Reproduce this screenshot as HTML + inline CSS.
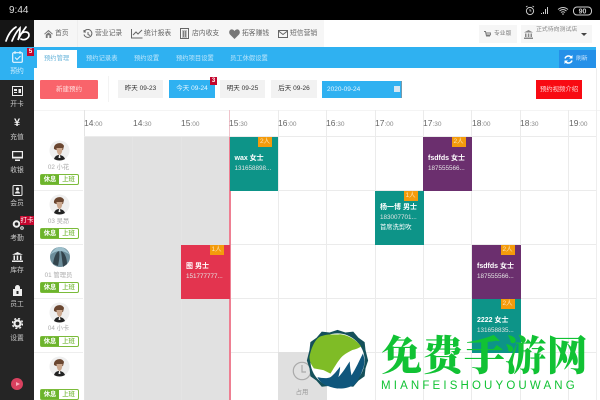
<!DOCTYPE html>
<html><head><meta charset="utf-8">
<style>
*{margin:0;padding:0;box-sizing:border-box}
html,body{width:600px;height:400px;overflow:hidden;background:#fff}
body{position:relative;font-family:"Liberation Sans","Noto Sans CJK SC",sans-serif}
#w{position:absolute;left:0;top:0;width:600px;height:400px;overflow:hidden;filter:blur(.3px)}
.a{position:absolute;white-space:nowrap}
.side{text-align:center;width:34px;left:0;color:#ccc;font-size:6.8px;line-height:12px}
.nav{font-size:6.8px;color:#666;line-height:12px;top:28px}
.tab{font-size:6.3px;color:#bfe6fb;line-height:12px;top:53px}
.day{top:80px;height:18px;background:#f2f2f2;color:#333;font-size:6.500px;line-height:18px;text-align:center;width:45px}
.t{top:117px;font-size:8.500px;color:#666;line-height:12px}
.t small{font-size:6.500px;color:#888}
.vl{top:110px;width:1px;height:290px;background:#ebebeb}
.hl{left:230px;width:366px;height:1px;background:#ebebeb}
.bk{color:#fff;width:48.5px}
.bd{position:absolute;right:6px;top:0;width:14px;height:10px;background:#f49b0b;font-size:6.500px;line-height:10px;text-align:center;color:#fde3b5}
.n{position:absolute;left:5px;top:17px;font-size:7px;font-weight:bold;line-height:10px}
.p{position:absolute;left:5px;top:27px;font-size:6.300px;line-height:10px;color:#e4e4e4}
.nm{left:34px;width:49px;text-align:center;font-size:6.300px;color:#aaa;line-height:9px}
.btn{left:40px;width:39px;height:11px;border:1px solid #7bbb3a;border-radius:2px;background:#fff;font-size:6.300px;line-height:9px;color:#8cc45a}
.btn b{display:inline-block;width:18px;height:9px;background:#6cb42c;color:#fff;text-align:center;float:left}
.btn span{display:inline-block;width:19px;text-align:center;float:left;font-weight:bold}
</style></head><body><div id="w">
<div class="a" style="left:0;top:0;width:600px;height:20px;background:#000"></div>
<div class="a" style="left:9px;top:4px;color:#ddd;font-size:10px;line-height:13px">9:44</div>
<svg class="a" style="left:524px;top:5px" width="70" height="11" viewBox="0 0 70 11">
<circle cx="6" cy="6" r="3.600" fill="none" stroke="#ccc" stroke-width="1"/><path d="M2 2l1.500-1M10 2L8.500 1M6 4v2h1.500" stroke="#ccc" fill="none" stroke-width=".8"/>
<path d="M17 8h1v1h-1zM19 7h1v2h-1zM21 4h1v5h-1zM23 2h1v7h-1z" fill="#ccc"/>
<path d="M34 4.500q5-4 10 0M35.500 6q3.500-3 7 0M37 7.500q2-1.500 4 0" stroke="#ccc" fill="none" stroke-width="1"/><circle cx="39" cy="9" r=".8" fill="#ccc"/>
<rect x="49.500" y="2" width="18" height="8" rx="3.500" fill="none" stroke="#ccc"/>
<text x="58.500" y="8.600" font-size="7" font-weight="bold" fill="#ccc" text-anchor="middle" font-family="Liberation Sans">90</text></svg>

<!-- top nav -->
<div class="a" style="left:34px;top:20px;width:566px;height:27px;background:#fff"></div>
<div class="a" style="left:34px;top:20px;width:43px;height:27px;background:#f6f6f6"></div>
<div class="a" style="left:77px;top:20px;width:247px;height:27px;background:#f6f6f6;border-left:1px solid #eee"></div>
<svg class="a" style="left:44px;top:29px" width="9" height="9" viewBox="0 0 10 10"><path d="M0 5.500L5 1l5 4.500-1 .5L5 2.700 1 6zM2 6.300L5 3.700l3 2.600V10H6V7H4v3H2z" fill="#777"/></svg>
<div class="a nav" style="left:55px">首页</div>
<svg class="a" style="left:83px;top:29px" width="10" height="10" viewBox="0 0 10 10"><path d="M1.500 2.200A4 4 0 1 1 1 5.500M1 1v2h2M5 3v2.500l2 1" stroke="#666" fill="none" stroke-width="1"/></svg>
<div class="a nav" style="left:95px">营业记录</div>
<svg class="a" style="left:131px;top:28px" width="12" height="11" viewBox="0 0 12 11"><path d="M.5 1v9h11M2 7l3-3 2 2 4-4" stroke="#666" fill="none" stroke-width="1"/></svg>
<div class="a nav" style="left:144px">统计报表</div>
<svg class="a" style="left:180px;top:28px" width="9" height="11" viewBox="0 0 9 11"><rect x=".5" y=".5" width="8" height="10" fill="none" stroke="#666"/><path d="M2 3h5M2 5h5M2 7h5M2 9h5M3.500 3v6M5.500 3v6" stroke="#666" stroke-width=".7"/></svg>
<div class="a nav" style="left:192px">店内收支</div>
<svg class="a" style="left:229px;top:29px" width="11" height="10" viewBox="0 0 11 10"><path d="M5.500 10L1 5.500C-1 3 1-.5 3.500.5c1 .3 1.600 1 2 1.500.4-.5 1-1.200 2-1.500C10-.5 12 3 10 5.500z" fill="#777"/></svg>
<div class="a nav" style="left:242px">拓客赚钱</div>
<svg class="a" style="left:278px;top:30px" width="10" height="8" viewBox="0 0 10 8"><rect x=".5" y=".5" width="9" height="7" fill="none" stroke="#666"/><path d="M.5 1L5 4.500 9.500 1" stroke="#666" fill="none"/></svg>
<div class="a nav" style="left:290px">短信营销</div>
<div class="a" style="left:479px;top:25px;width:38px;height:18px;background:#f6f6f6"></div>
<svg class="a" style="left:484px;top:31px" width="7" height="7" viewBox="0 0 7 7"><path d="M0 .5h1.500L2.500 5H6M2 2h5l-.7 2H2.500" stroke="#777" fill="none"/></svg>
<div class="a" style="left:494px;top:30px;font-size:5.800px;color:#777;line-height:9px">专业版</div>
<div class="a" style="left:521px;top:25px;width:71px;height:18px;background:#f6f6f6"></div>
<svg class="a" style="left:524px;top:30px" width="9" height="9" viewBox="0 0 9 9"><path d="M4.500 0L9 2.500H0zM1 3.500h1.500V7H1zM3.800 3.500h1.500V7H3.800zM6.500 3.500H8V7H6.500zM0 7.500h9V9H0z" fill="#888"/></svg>
<div class="a" style="left:536px;top:26px;font-size:5.900px;color:#888;line-height:9px">正式待向测试店</div>
<div class="a" style="left:581px;top:33px;border:3px solid transparent;border-top:3.500px solid #444"></div>

<!-- tab bar -->
<div class="a" style="left:34px;top:47px;width:562px;height:21px;background:#2fb1f1"></div>
<div class="a" style="left:37px;top:50px;width:40px;height:18px;background:#fff"></div>
<div class="a tab" style="left:44px;color:#68b4da">预约管理</div>
<div class="a tab" style="left:86px">预约记录表</div>
<div class="a tab" style="left:134px">预约设置</div>
<div class="a tab" style="left:176px">预约项目设置</div>
<div class="a tab" style="left:230px">员工休假设置</div>
<div class="a" style="left:559px;top:50px;width:37px;height:18px;background:#2590e8"></div>
<svg class="a" style="left:564px;top:55px" width="9" height="9" viewBox="0 0 9 9"><path d="M1 3.500A3.700 3.700 0 0 1 7.500 2.500M8 5.500A3.700 3.700 0 0 1 1.500 6.500" stroke="#fff" fill="none" stroke-width="1.500"/><path d="M8.500 0v3.500H5zM.5 9V5.500H4z" fill="#fff"/></svg>
<div class="a" style="left:576px;top:55px;font-size:5.800px;color:#cfe6fb;line-height:9px">刷新</div>

<!-- toolbar -->
<div class="a" style="left:40px;top:80px;width:58px;height:19px;background:#f9646b;border-radius:1px;color:#ffdcdc;font-size:6.500px;line-height:19px;text-align:center">新建预约</div>
<div class="a" style="left:108px;top:76px;width:1px;height:26px;background:#f3f3f3"></div>
<div class="a day" style="left:118px">昨天 09-23</div>
<div class="a day" style="left:169px;width:46px;background:#2fb1f1;color:#e6f6ff">今天 09-24</div>
<div class="a" style="left:210px;top:77px;width:7px;height:8px;background:#c3062d;color:#fff;font-size:6px;line-height:8px;text-align:center;font-weight:bold">3</div>
<div class="a day" style="left:220px">明天 09-25</div>
<div class="a day" style="left:271px;width:46px">后天 09-26</div>
<div class="a" style="left:322px;top:80.500px;width:80px;height:17px;background:#2fb1f1;border-right:1px solid #79a;color:#e6f6ff;font-size:6.500px;line-height:17px;padding-left:5px">2020-09-24</div>
<div class="a" style="left:394px;top:86px;width:6px;height:6px;background:#d5e6f2"></div>
<div class="a" style="left:536px;top:80px;width:46px;height:19px;background:#f80a12;color:#ffd7d7;font-size:6.400px;line-height:19px;text-align:center">预约视频介绍</div>

<!-- sidebar -->
<div class="a" style="left:0;top:20px;width:34px;height:380px;background:#252525"></div>
<div class="a" style="left:0;top:20px;width:34px;height:27px;background:#151515"></div>
<svg class="a" style="left:5px;top:25px" width="25" height="17" viewBox="0 0 25 17"><path d="M1 16C3 10 6 5 11 2M7 16C9 11 11 7 15 3C15 8 14 12 13 15C15 10 18 6 21 2M16 14C20 16 24 13 24 10C24 7 20 6 17 8" stroke="#fff" fill="none" stroke-width="1.700" stroke-linecap="round"/></svg>
<div class="a" style="left:0;top:47px;width:34px;height:33px;background:#2fb1f1"></div>
<div class="a" style="left:27px;top:48px;width:7px;height:8px;background:#c3062d;color:#fff;font-size:6px;line-height:8px;text-align:center;font-weight:bold">5</div>
<svg class="a" style="left:12px;top:51px" width="11" height="12" viewBox="0 0 11 12"><rect x=".7" y="1.700" width="9.600" height="9.600" rx="1" fill="none" stroke="#eaf7ff" stroke-width="1.200"/><path d="M3 0v3M8 0v3M3 6.500l2 2 3.500-3.500" stroke="#eaf7ff" fill="none" stroke-width="1"/></svg>
<div class="a side" style="top:66px;color:#d4effd">预约</div>
<svg class="a" style="left:12px;top:86px" width="11" height="10" viewBox="0 0 11 10"><rect x=".5" y=".5" width="10" height="9" fill="none" stroke="#eee"/><path d="M2 3h3v2H2zM2 6h3v1H2zM6.500 3H9v4H6.500z" fill="#eee"/></svg>
<div class="a side" style="top:99px">开卡</div>
<div class="a side" style="top:117px;font-size:11px;font-weight:bold;color:#eee">¥</div>
<div class="a side" style="top:132px">充值</div>
<svg class="a" style="left:12px;top:151px" width="11" height="10" viewBox="0 0 11 10"><path d="M0 0h11v7.500H0zM3 8.500h5V10H3z" fill="#eee"/><rect x="1.200" y="1.200" width="8.600" height="4.500" fill="#252525"/></svg>
<div class="a side" style="top:165px">收银</div>
<svg class="a" style="left:12px;top:185px" width="11" height="11" viewBox="0 0 11 11"><rect x="1" y=".5" width="9" height="10" rx="1" fill="none" stroke="#eee"/><circle cx="5.500" cy="4" r="1.600" fill="#eee"/><path d="M3 8.500c0-3 5-3 5 0z" fill="#eee"/></svg>
<div class="a side" style="top:198px">会员</div>
<svg class="a" style="left:12px;top:219px" width="12" height="11" viewBox="0 0 12 11"><circle cx="4.500" cy="5" r="2.800" fill="none" stroke="#eee" stroke-width="2"/><circle cx="10" cy="9" r="1.300" fill="none" stroke="#eee"/></svg>
<div class="a" style="left:20px;top:216px;width:14px;height:9px;background:#c3062d;color:#fff;font-size:6.500px;line-height:9px;text-align:center">打卡</div>
<div class="a side" style="top:233px">考勤</div>
<svg class="a" style="left:12px;top:252px" width="11" height="10" viewBox="0 0 11 10"><path d="M5.500 0L11 2.700H0zM1.500 3.500h1.500V8H1.500zM4.700 3.500h1.500V8H4.700zM8 3.500h1.500V8H8zM0 8.500h11V10H0z" fill="#eee"/></svg>
<div class="a side" style="top:265px">库存</div>
<svg class="a" style="left:13px;top:285px" width="9" height="11" viewBox="0 0 9 11"><path d="M4.500 0a2.500 2.500 0 0 1 2.500 2.500V4H9v7H0V4h2V2.500A2.500 2.500 0 0 1 4.500 0z" fill="#eee"/><rect x="3.500" y="6" width="2" height="3" fill="#252525"/></svg>
<div class="a side" style="top:299px">员工</div>
<svg class="a" style="left:12px;top:318px" width="11" height="11" viewBox="0 0 11 11"><circle cx="5.500" cy="5.500" r="3" fill="none" stroke="#eee" stroke-width="2.200"/><circle cx="5.500" cy="5.500" r="5" fill="none" stroke="#eee" stroke-width="1.500" stroke-dasharray="2 2"/></svg>
<div class="a side" style="top:333px">设置</div>
<div class="a" style="left:11px;top:378px;width:12px;height:12px;border-radius:50%;background:#d9415f"></div>
<div class="a" style="left:16px;top:381.500px;border:2.500px solid transparent;border-left:4px solid #f4b0bd"></div>

<!-- grid -->
<div class="a" style="left:84px;top:137px;width:145.500px;height:263px;background:#e1e1e1"></div>
<div class="a" style="left:34px;top:110px;width:566px;height:1px;background:#f4f4f4"></div>
<div class="a vl" style="left:84px;background:#e4e4e4"></div><div class="a vl" style="left:132px;background:#e4e4e4;top:137px;height:263px"></div><div class="a vl" style="left:181px;background:#e4e4e4;top:137px;height:263px"></div>
<div class="a vl" style="left:278px"></div><div class="a vl" style="left:326px"></div><div class="a vl" style="left:375px"></div><div class="a vl" style="left:423px"></div><div class="a vl" style="left:471px"></div><div class="a vl" style="left:520px"></div><div class="a vl" style="left:568px"></div>
<div class="a" style="left:596px;top:68px;width:1px;height:332px;background:#eee"></div>
<div class="a hl" style="top:136px;left:84px;width:512px"></div><div class="a hl" style="top:190px"></div><div class="a hl" style="top:244px"></div><div class="a hl" style="top:298px"></div><div class="a hl" style="top:352px"></div>
<div class="a" style="left:229px;top:110px;width:1px;height:27px;background:#f0c4cc"></div>
<div class="a" style="left:229px;top:137px;width:2px;height:263px;background:#ee7f92"></div>

<div class="a t" style="left:84px">14<small>:00</small></div>
<div class="a t" style="left:133px">14<small>:30</small></div>
<div class="a t" style="left:181px">15<small>:00</small></div>
<div class="a t" style="left:229px">15<small>:30</small></div>
<div class="a t" style="left:278px">16<small>:00</small></div>
<div class="a t" style="left:326px">16<small>:30</small></div>
<div class="a t" style="left:375px">17<small>:00</small></div>
<div class="a t" style="left:423px">17<small>:30</small></div>
<div class="a t" style="left:472px">18<small>:00</small></div>
<div class="a t" style="left:520px">18<small>:30</small></div>
<div class="a t" style="left:569px">19<small>:00</small></div>

<!-- staff -->
<div class="a" style="left:34px;top:190px;width:49px;height:1px;background:#eee"></div>
<div class="a" style="left:34px;top:244px;width:49px;height:1px;background:#eee"></div>
<div class="a" style="left:34px;top:298px;width:49px;height:1px;background:#eee"></div>
<div class="a" style="left:34px;top:352px;width:49px;height:1px;background:#eee"></div>
<svg width="0" height="0" style="position:absolute"><defs><g id="f"><circle cx="10.500" cy="10.500" r="10" fill="#efefef"/><path d="M5 9C4 3 13 1 15 6l-1 4H7z" fill="#6a4630"/><path d="M7.500 8h6c0 4-1.500 7-3 7s-3-3-3-7z" fill="#cba88f"/><path d="M5 19c1-3 3-4 5-4s5 1 6 4c-3 2-8 2-11 0z" fill="#222"/><path d="M10 15l1 0 .5 3h-2z" fill="#eee"/></g></defs></svg>
<svg class="a" style="left:49px;top:140px" width="21" height="21"><use href="#f"/></svg>
<div class="a nm" style="top:163px">02 小花</div>
<div class="a btn" style="top:174px"><b>休息</b><span>上班</span></div>
<svg class="a" style="left:49px;top:194px" width="21" height="21"><use href="#f"/></svg>
<div class="a nm" style="top:217px">03 吴昂</div>
<div class="a btn" style="top:228px"><b>休息</b><span>上班</span></div>
<svg class="a" style="left:50px;top:247px" width="20" height="20" viewBox="0 0 20 20"><circle cx="10" cy="10" r="10" fill="#6c8d9a"/><path d="M3 17c1-7 3-12 6-13 1 5 0 10-1 15zM11 4c3 1 6 6 6 13l-4 3z" fill="#33444c"/><path d="M0 8q5-8 10-8t10 8q-5-4-10-4T0 8z" fill="#9ec0cc"/></svg>
<div class="a nm" style="top:271px">01 管理员</div>
<div class="a btn" style="top:282px"><b>休息</b><span>上班</span></div>
<svg class="a" style="left:49px;top:302px" width="21" height="21"><use href="#f"/></svg>
<div class="a nm" style="top:324px">04 小卡</div>
<div class="a btn" style="top:336px"><b>休息</b><span>上班</span></div>
<svg class="a" style="left:49px;top:356px" width="21" height="21"><use href="#f"/></svg>
<div class="a btn" style="top:389px"><b>休息</b><span>上班</span></div>

<!-- bookings -->
<div class="a bk" style="left:229.500px;top:137px;height:54px;background:#0d9488"><div class="bd">2人</div><div class="n">wax 女士</div><div class="p">131658898...</div></div>
<div class="a bk" style="left:423px;top:137px;height:54px;background:#6b2f6e"><div class="bd">2人</div><div class="n">fsdfds 女士</div><div class="p">187555566...</div></div>
<div class="a bk" style="left:375px;top:191px;height:54px;background:#0d9488"><div class="bd">1人</div><div class="n" style="top:12px">杨一博 男士</div><div class="p" style="top:22px">183007701...</div><div class="p" style="top:32px;color:#fff">首席洗剪吹</div></div>
<div class="a bk" style="left:181px;top:245px;height:53.500px;background:#e3344f"><div class="bd">1人</div><div class="n">图 男士</div><div class="p">151777777...</div></div>
<div class="a bk" style="left:472px;top:245px;height:53.500px;background:#6b2f6e"><div class="bd">2人</div><div class="n">fsdfds 女士</div><div class="p">187555566...</div></div>
<div class="a bk" style="left:472px;top:298.500px;height:54px;background:#0d9488"><div class="bd">2人</div><div class="n">2222 女士</div><div class="p">131658835...</div></div>
<div class="a" style="left:278px;top:352px;width:48.500px;height:48px;background:#e0e0e0"></div>
<svg class="a" style="left:292px;top:361px" width="20" height="20" viewBox="0 0 20 20"><circle cx="10" cy="10" r="8.700" fill="none" stroke="#aaa" stroke-width="1.200"/><path d="M10 4v7h4" stroke="#aaa" fill="none" stroke-width="1.200"/></svg>
<div class="a" style="left:278px;top:388px;width:48px;text-align:center;font-size:6.300px;color:#999;line-height:9px">占用</div>

<!-- watermark -->
<svg class="a" style="left:305px;top:329px" width="65" height="63" viewBox="0 0 72 72">
<path d="M36 1l9 3 9-1 6 7 7 5 1 9 3 12-3 9-1 9-7 5-6 7-9-1-9 3-9-3-9 1-6-7-7-5-1-9-3-9 3-12 1-9 7-5 6-7 9 1z" fill="#14505a"/>
<circle cx="36" cy="36" r="31" fill="#fff"/>
<path d="M4 32C6 20 12 9 18 8 26 5 33 7 39 6 49 7 58 13 63 20 60 22 57 23 53 24 47 27 42 30 39 34 35 39 31 46 28 51L20 47 9 45C6 41 4 37 4 32z" fill="#7fbc26"/>
<path d="M13 55C18 56 24 57 28 55 32 52 36 47 39 43 39 47 38 51 37 55 42 50 46 43 50 37 50 42 51 48 52 53 57 45 61 36 65 28 67 33 67 38 66 43 63 52 59 60 55 64 49 67 44 68 39 68 32 68 27 66 22 64 18 62 15 59 13 55z" fill="#0f567c"/>
</svg>
<div class="a" style="left:381px;top:330px;font-family:'Noto Serif CJK SC','Liberation Serif',serif;font-weight:900;font-size:41px;line-height:46px;color:#11c234;letter-spacing:.4px">免费手游网</div>
<div class="a" style="left:381px;top:379px;font-size:11.500px;line-height:14px;color:#11c234;letter-spacing:3.150px">MIANFEISHOUYOUWANG</div>
</div></body></html>
